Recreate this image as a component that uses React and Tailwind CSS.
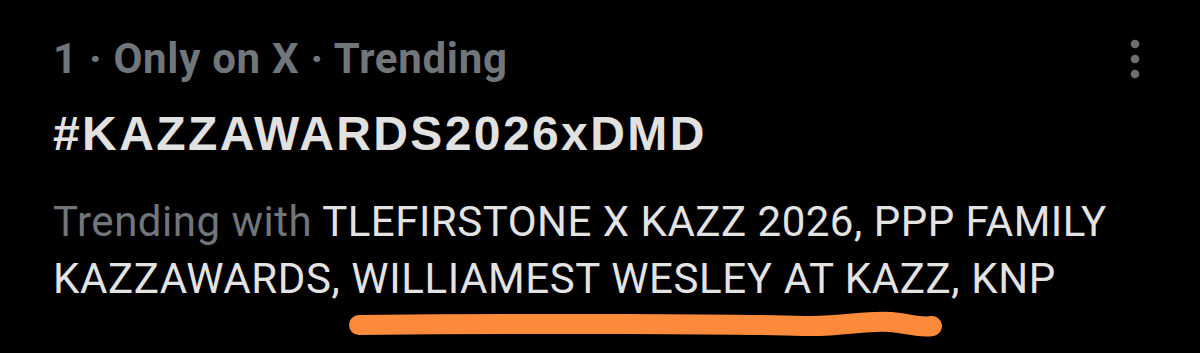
import React from "react";

// trending row, dark theme
const MoreDots = () => (
  <svg width="12" height="42" viewBox="0 0 12 42" className="block">
    <circle cx="6" cy="6" r="4.3" fill="#6e6e6e" />
    <circle cx="6" cy="21" r="4.3" fill="#6e6e6e" />
    <circle cx="6" cy="36" r="4.3" fill="#6e6e6e" />
  </svg>
);

const Scribble = () => (
  <svg width="610" height="40" viewBox="0 0 610 40" className="block">
    <path
      d="M20 18 C 200 16, 400 17, 465 19 C 505 20, 525 13, 552 15 C 572 17, 580 21, 593 19"
      fill="none"
      stroke="#fb8b3b"
      strokeWidth="20"
      strokeLinecap="round"
    />
  </svg>
);

export default function App() {
  return (
    <div className="w-[1200px] h-[353px] bg-black overflow-hidden flex font-['Roboto',sans-serif]">
      <div className="flex-1 pl-[53px] pt-[34px]">
        <div className="h-[50px] leading-[50px] text-[42px] tracking-[0.7px] font-bold text-[#71767b] whitespace-nowrap">
          1 · Only on X · Trending
        </div>
        <div className="mt-[22px] h-[56px] leading-[56px] text-[48px] tracking-[2.4px] font-bold text-[#e1e1e1] whitespace-nowrap font-['Liberation_Sans',sans-serif]">
          #KAZZAWARDS2026xDMD
        </div>
        <div className="mt-[31px] text-[42px] leading-[57px] tracking-[0.5px] text-[#e3e3e3]">
          <div className="whitespace-nowrap">
            <span className="text-[#71767b]">Trending with </span>
            TLEFIRSTONE X KAZZ 2026, PPP FAMILY
          </div>
          <div className="whitespace-nowrap tracking-[0.6px]">
            KAZZAWARDS, WILLIAMEST WESLEY AT KAZZ, KNP
          </div>
        </div>
        <div className="ml-[286px]">
          <Scribble />
        </div>
      </div>
      <div className="pt-[38px] pr-[59px]">
        <MoreDots />
      </div>
    </div>
  );
}
